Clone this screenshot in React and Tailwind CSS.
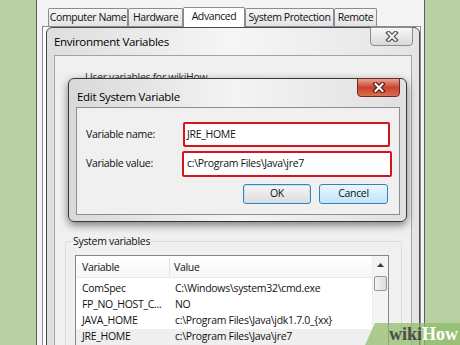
const tabs = [
  { label: 'Computer Name', w: 'w-[80px]' },
  { label: 'Hardware', w: 'w-[55px]' },
  { label: 'Advanced', w: 'w-[62px]', active: true },
  { label: 'System Protection', w: 'w-[89px]' },
  { label: 'Remote', w: 'w-[43px]' },
];

const rows = [
  ['ComSpec', 'C:\\Windows\\system32\\cmd.exe'],
  ['FP_NO_HOST_C...', 'NO'],
  ['JAVA_HOME', 'c:\\Program Files\\Java\\jdk1.7.0_{xx}'],
  ['JRE_HOME', 'c:\\Program Files\\Java\\jre7'],
];

function CloseGlyph({ fill, outline }) {
  return (
    <svg width="14" height="11" viewBox="0 0 14 11">
      <path d="M3.5 2 L10.5 9 M10.5 2 L3.5 9" stroke={outline} strokeWidth="4.5" strokeLinecap="square" fill="none" />
      <path d="M3.5 2 L10.5 9 M10.5 2 L3.5 9" stroke={fill} strokeWidth="2" strokeLinecap="square" fill="none" />
    </svg>
  );
}

export default function App() {
  return (
    <div className="relative w-[460px] h-[345px] overflow-hidden bg-[#b9cfa4] font-['Open_Sans','Noto_Sans',sans-serif] text-[10.5px] tracking-[-0.3px] text-[#111]">
      {/* System Properties window */}
      <div className="absolute left-[36px] top-0 w-[389px] h-[345px] bg-[#f4f4f4] border-x border-[#5f5f5f]">
        <div className="flex items-end h-[26px] pl-[11px]">
          {tabs.map((t) => (
            <div
              key={t.label}
              className={
                t.active
                  ? `${t.w} h-[20px] -mb-[1px] z-10 bg-white border border-b-0 border-[#898c95] rounded-t-[2px] flex items-start justify-center pt-[1px] whitespace-nowrap tracking-[-0.4px]`
                  : `${t.w} h-[18px] bg-gradient-to-b from-[#f6f6f6] to-[#e3e3e3] border border-b-0 border-[#898c95] rounded-t-[2px] flex items-center justify-center whitespace-nowrap tracking-[-0.4px]`
              }
            >
              {t.label}
            </div>
          ))}
        </div>
        <div className="ml-[5px] mr-[3px] h-[330px] bg-white border border-[#898c95]" />
      </div>

      {/* Environment Variables window */}
      <div className="absolute left-[46px] top-[27px] w-[374px] h-[330px] rounded-t-[6px] border border-[#4a4a4a] bg-gradient-to-r from-[#dedede] via-[#f6f6f6] to-[#e4e4e4] flex flex-col">
        <div className="h-[27px] shrink-0 flex items-center pt-[1px] pl-[7px] text-[11.5px] text-black">Environment Variables</div>
        <div className="absolute right-[6px] -top-[1px] w-[43px] h-[19px] rounded-b-[4px] border border-[#8c8c8c] bg-gradient-to-b from-[#f7f7f7] to-[#d9d9d9] flex items-center justify-center">
          <CloseGlyph fill="#f2f2f2" outline="#555" />
        </div>
        <div className="mx-[7px] flex-1 min-h-0 bg-[#f0f0f0] border border-[#a3a3a3] flex flex-col">
          <div className="shrink-0 mt-[14px] ml-[30px] h-[14px] leading-[14px] text-[#333]">User variables for wikiHow</div>
          {/* System variables group */}
          <div className="relative shrink-0 mt-[157px] ml-[10px] mr-[9px] border border-[#d5dfe5] rounded-[3px] h-[140px]">
            <div className="absolute -top-[9px] left-[6px] bg-[#f0f0f0] px-[1px] leading-[16px]">System variables</div>
            <div className="mt-[13px] ml-[9px] mr-[12px] h-[120px] bg-white border border-[#828790] flex">
              <div className="flex-1 flex flex-col">
                <div className="h-[22px] shrink-0 flex pt-[2px] border-b border-[#eaeaea] bg-gradient-to-b from-white to-[#f6f6f6]">
                  <div className="w-[94px] pl-[6px] flex items-center border-r border-[#e3e3e3]">Variable</div>
                  <div className="pl-[4px] flex items-center">Value</div>
                </div>
                <div className="mt-[3px] flex flex-col">
                  {rows.map(([name, value], i) => (
                    <div key={name} className={`h-[16px] shrink-0 flex items-center ${i === 3 ? 'bg-[#efefef]' : ''}`}>
                      <div className="w-[95px] pl-[6px] whitespace-nowrap">{name}</div>
                      <div className="pl-[4px] whitespace-nowrap">{value}</div>
                    </div>
                  ))}
                </div>
              </div>
              <div className="w-[16px] bg-[#f4f4f4] border-l border-[#ececec] flex flex-col items-center">
                <div className="h-[18px] flex items-center justify-center">
                  <svg width="7" height="4" viewBox="0 0 7 4"><path d="M0 4 L3.5 0 L7 4 Z" fill="#3c3c3c" /></svg>
                </div>
                <div className="mt-[2px] w-[13px] h-[15px] rounded-[2px] border border-[#979797] bg-gradient-to-r from-[#f3f3f3] to-[#dcdcdc]" />
              </div>
            </div>
          </div>
        </div>
      </div>

      {/* Edit System Variable dialog */}
      <div className="absolute left-[68px] top-[78px] w-[339px] h-[144px] rounded-[6px] border border-[#383838] bg-gradient-to-r from-[#d9d9d9] via-[#f4f4f4] to-[#e0e0e0] shadow-[0_3px_9px_rgba(0,0,0,0.5)] flex flex-col">
        <div className="h-[28px] shrink-0 flex items-center pt-[7px] pl-[8px] text-[11.5px] text-black">Edit System Variable</div>
        <div className="absolute right-[6px] -top-[1px] w-[43px] h-[19px] rounded-b-[4px] border border-[#6b2c25] bg-gradient-to-b from-[#e7a393] via-[#c8432f] to-[#d9704f] flex items-center justify-center">
          <CloseGlyph fill="#ffffff" outline="#5a1e16" />
        </div>
        <div className="ml-[7px] mr-[6px] mb-[6px] flex-1 bg-[#f0f0f0] border border-[#8e8e8e] flex flex-col">
          <div className="mt-[14px] h-[25px] flex items-center pl-[9px]">
            <div className="w-[97px]">Variable name:</div>
            <div className="w-[207px] h-[25px] border-2 border-[#d4151d] rounded-[2px] bg-white flex items-center pl-[2px]">JRE_HOME</div>
          </div>
          <div className="mt-[4px] h-[26px] flex items-center pl-[9px]">
            <div className="w-[96px]">Variable value:</div>
            <div className="w-[210px] h-[26px] border-2 border-[#d4151d] rounded-[2px] bg-white flex items-center pl-[3px]">c:\Program Files\Java\jre7</div>
          </div>
          <div className="mt-[7px] flex justify-end gap-[8px] pr-[11px]">
            <div className="w-[68px] h-[20px] rounded-[3px] border border-[#3c7fb1] bg-gradient-to-b from-[#f6f6f6] to-[#dcdcdc] shadow-[inset_0_0_0_1px_#bfe3f8] flex items-center justify-center">OK</div>
            <div className="w-[69px] h-[20px] rounded-[3px] border border-[#3c7fb1] bg-gradient-to-b from-[#eaf6fd] to-[#bfe5fb] flex items-center justify-center">Cancel</div>
          </div>
        </div>
      </div>

      {/* wikiHow watermark */}
      <div className="absolute right-0 bottom-0 w-[95px] h-[22px] bg-[rgba(140,185,100,0.7)] [clip-path:polygon(10px_0,100%_0,100%_100%,0_100%)] flex items-center justify-end pr-[2px] font-['Liberation_Serif',serif] font-bold text-[18px] tracking-normal leading-none">
        <span className="text-[#4b4b4b]">wiki</span>
        <span className="text-white">How</span>
      </div>
    </div>
  );
}
